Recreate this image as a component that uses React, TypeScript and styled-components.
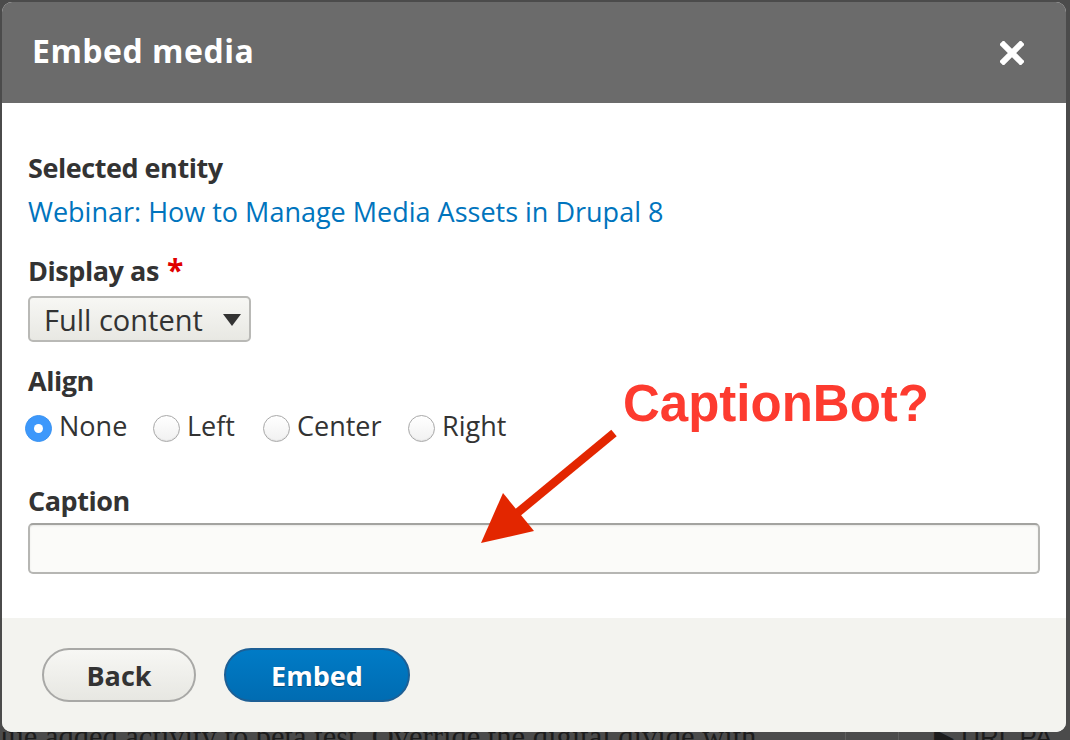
import React from "react";
import styled, { createGlobalStyle } from "styled-components";

const Global = createGlobalStyle`
  html, body { margin: 0; padding: 0; background: #4b4b4b; }
  body { width: 1070px; height: 740px; overflow: hidden; font-family: "Open Sans", "DejaVu Sans", sans-serif; }
  * { box-sizing: border-box; }
`;

const Page = styled.div`
  width: 1070px;
  height: 740px;
  overflow: hidden;
  padding: 2px 4px 0 2px;
  display: flex;
  flex-direction: column;
`;

const Dialog = styled.div`
  position: relative;
  flex: none;
  width: 1064px;
  height: 730px;
  border-radius: 10px;
  overflow: hidden;
  background: #fff;
  display: flex;
  flex-direction: column;
`;

const Header = styled.div`
  flex: none;
  height: 101px;
  background: #6b6b6b;
  display: flex;
  align-items: center;
  justify-content: space-between;
  padding: 0 42px 3px 30px;
`;

const Title = styled.h1`
  margin: 0;
  font-size: 32px;
  font-weight: 700;
  line-height: 1;
  color: #fff;
  letter-spacing: 0.5px;
`;

const CloseButton = styled.button`
  border: 0;
  padding: 0;
  background: none;
  width: 24px;
  height: 24px;
  display: flex;
  margin-top: 3px;
`;

const Body = styled.div`
  flex: none;
  height: 515px;
  padding: 46.5px 26px 0 26px;
  display: flex;
  flex-direction: column;
`;

const Label = styled.div<{ $mt?: number }>`
  font-size: 27px;
  font-weight: 700;
  line-height: 36px;
  letter-spacing: -0.45px;
  color: #333;
  margin-top: ${(p) => p.$mt ?? 0}px;
`;

const Required = styled.span`
  color: #e00000;
  margin-left: 8px;
  font-size: 30px;
`;

const EntityLink = styled.a`
  font-size: 27px;
  line-height: 36px;
  color: #0074bd;
  text-decoration: none;
  margin-top: 8px;
`;

const Select = styled.div`
  margin-top: 7.5px;
  width: 223px;
  height: 46px;
  border: 2px solid #b9b9b6;
  border-radius: 5px;
  background: linear-gradient(#f7f7f4, #e8e8e3);
  display: flex;
  align-items: center;
  justify-content: space-between;
  padding: 0 8px 0 14px;
  font-size: 29px;
  color: #333;
`;

const Caret = styled.span`
  width: 0;
  height: 0;
  border-left: 9.5px solid transparent;
  border-right: 9.5px solid transparent;
  border-top: 12px solid #333;
  margin-top: 2px;
`;

const RadioRow = styled.div`
  margin-top: 9px;
  display: flex;
  height: 36px;
`;

const Option = styled.label<{ $w: number }>`
  width: ${(p) => p.$w}px;
  flex: none;
  display: flex;
  align-items: flex-start;
  gap: 7px;
  margin-left: -3px;
  margin-right: 3px;
  font-size: 27px;
  line-height: 36px;
  color: #333;
`;

const Radio = styled.span<{ $checked?: boolean }>`
  flex: none;
  width: 27px;
  height: 27px;
  margin-top: 7.5px;
  border-radius: 50%;
  display: flex;
  align-items: center;
  justify-content: center;
  border: 1px solid ${(p) => (p.$checked ? "#3a93f2" : "#a9a9a9")};
  background: ${(p) =>
    p.$checked ? "#3d98fb" : "linear-gradient(#ffffff, #f1f1f1)"};
  box-shadow: ${(p) => (p.$checked ? "none" : "inset 0 -1px 1px rgba(0,0,0,0.06)")};
  &::after {
    content: "";
    display: ${(p) => (p.$checked ? "block" : "none")};
    width: 9px;
    height: 9px;
    border-radius: 50%;
    background: #fff;
  }
`;

const TextInput = styled.div`
  margin-top: 4.5px;
  width: 1012px;
  height: 51px;
  border: 2px solid #b6b6b3;
  border-top-color: #a3a3a0;
  border-radius: 5px;
  background: #fbfbf9;
  box-shadow: inset 0 1px 2px rgba(0, 0, 0, 0.08);
`;

const Footer = styled.div`
  flex: 1;
  background: #f3f3ef;
  padding: 30px 40px;
  display: flex;
  align-items: flex-start;
  gap: 28px;
`;

const Button = styled.button<{ $primary?: boolean; $w: number }>`
  width: ${(p) => p.$w}px;
  height: 54px;
  border-radius: 27px;
  font-family: "Open Sans", "DejaVu Sans", sans-serif;
  font-size: 27px;
  font-weight: 700;
  padding: 0;
  border: 2px solid ${(p) => (p.$primary ? "#1d5f95" : "#a8a8a6")};
  background: ${(p) =>
    p.$primary
      ? "linear-gradient(#007bc6, #006cb2)"
      : "linear-gradient(#f7f7f4, #e7e7e2)"};
  color: ${(p) => (p.$primary ? "#fff" : "#333")};
  text-shadow: ${(p) => (p.$primary ? "0 1px 1px rgba(0,0,0,0.35)" : "none")};
`;

const Annotation = styled.div`
  position: absolute;
  left: 621px;
  top: 376px;
  font-family: "Liberation Sans", Arial, sans-serif;
  font-weight: 700;
  font-size: 51px;
  line-height: 1;
  color: #fd3b2f;
`;

const ArrowSvg = styled.svg`
  position: absolute;
  left: 468px;
  top: 418px;
`;

const Backdrop = styled.div`
  flex: none;
  margin-left: -2px;
  width: 1070px;
  height: 8px;
  overflow: hidden;
  display: flex;
  align-items: flex-start;
`;

const BackdropText = styled.div`
  flex: none;
  width: 845px;
  margin-top: -10.5px;
  font-family: "Liberation Serif", "Times New Roman", serif;
  font-size: 30.5px;
  line-height: 30px;
  color: #1c1c1c;
  white-space: nowrap;
`;

const BackdropCell = styled.div<{ $w: number }>`
  flex: none;
  width: ${(p) => p.$w}px;
  height: 8px;
  border-left: 1px solid #5e5e5e;
`;

const BackdropNav = styled.div`
  flex: none;
  margin-top: -9px;
  font-family: "Liberation Sans", Arial, sans-serif;
  font-size: 26px;
  line-height: 28px;
  color: #1c1c1c;
  white-space: nowrap;
  padding-left: 34px;
`;

export default function App() {
  return (
    <>
      <Global />
      <Page>
        <Dialog>
          <Header>
            <Title>Embed media</Title>
            <CloseButton aria-label="Close">
              <svg width="24" height="24" viewBox="0 0 24 24">
                <path
                  d="M3.5 3.5 L20.5 20.5 M20.5 3.5 L3.5 20.5"
                  stroke="#fff"
                  strokeWidth="6"
                  strokeLinecap="square"
                  fill="none"
                />
              </svg>
            </CloseButton>
          </Header>
          <Body>
            <Label>Selected entity</Label>
            <EntityLink href="#">Webinar: How to Manage Media Assets in Drupal 8</EntityLink>
            <Label $mt={22}>
              Display as<Required>*</Required>
            </Label>
            <Select>
              <span>Full content</span>
              <Caret />
            </Select>
            <Label $mt={20.5}>Align</Label>
            <RadioRow>
              <Option $w={128}>
                <Radio $checked />
                None
              </Option>
              <Option $w={110}>
                <Radio />
                Left
              </Option>
              <Option $w={145}>
                <Radio />
                Center
              </Option>
              <Option $w={120}>
                <Radio />
                Right
              </Option>
            </RadioRow>
            <Label $mt={39}>Caption</Label>
            <TextInput />
          </Body>
          <Footer>
            <Button $w={154}>Back</Button>
            <Button $w={186} $primary>
              Embed
            </Button>
          </Footer>
          <Annotation>CaptionBot?</Annotation>
          <ArrowSvg width="160" height="140" viewBox="0 0 160 140">
            <line x1="144" y1="13" x2="46" y2="94" stroke="#e32600" strokeWidth="8.5" />
            <polygon points="11,123 33,73 64,111" fill="#e32600" />
          </ArrowSvg>
        </Dialog>
        <Backdrop>
          <BackdropText>lue added activity to beta test. Override the digital divide with</BackdropText>
          <BackdropCell $w={53} />
          <BackdropCell $w={2} />
          <BackdropNav>▶ URL PA</BackdropNav>
        </Backdrop>
      </Page>
    </>
  );
}
